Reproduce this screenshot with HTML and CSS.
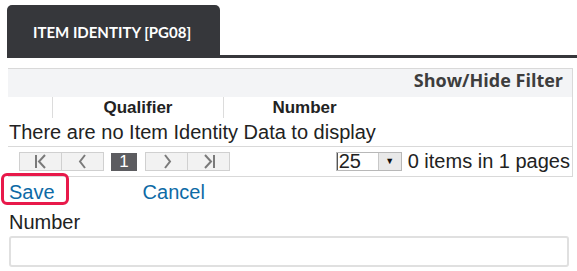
FILE: index.html
```html
<!DOCTYPE html>
<html lang="en">
<head>
    <meta charset="UTF-8">
    <meta name="viewport" content="width=device-width, initial-scale=1.0">
    <title>Item Identity</title>
    <link rel="stylesheet" href="styles.css">
</head>
<body>
    <div class="tabs">
        <div class="tab">ITEM IDENTITY [PG08]</div>
    </div>
    <div class="grid">
        <div class="toolbar">Show/Hide Filter</div>
        <div class="grid-head">
            <div class="col col-first"></div>
            <div class="col col-qual">Qualifier</div>
            <div class="col col-num">Number</div>
        </div>
        <div class="empty">There are no Item Identity Data to display</div>
        <div class="pager">
            <div class="pager-nav">
                <span class="pbtn"><svg width="16" height="15" viewBox="0 0 16 15"><path d="M3 1v13M12 1L6 7.5l6 6.5" fill="none" stroke="#7a7a7a" stroke-width="2"/></svg></span>
                <span class="pbtn"><svg width="10" height="15" viewBox="0 0 10 15"><path d="M7 1L2 7.5l5 6.5" fill="none" stroke="#7a7a7a" stroke-width="2"/></svg></span>
                <span class="pcur">1</span>
                <span class="pbtn"><svg width="10" height="15" viewBox="0 0 10 15"><path d="M3 1l5 6.5-5 6.5" fill="none" stroke="#7a7a7a" stroke-width="2"/></svg></span>
                <span class="pbtn"><svg width="16" height="15" viewBox="0 0 16 15"><path d="M4 1l6 6.5-6 6.5M13 1v13" fill="none" stroke="#7a7a7a" stroke-width="2"/></svg></span>
            </div>
            <div class="pager-info">
                <span class="psize"><span class="psize-val">25</span><span class="psize-arrow">&#9660;</span></span>
                <span>0 items in 1 pages</span>
            </div>
        </div>
    </div>
    <div class="actions">
        <a href="#" class="link save">Save</a>
        <a href="#" class="link">Cancel</a>
    </div>
    <div class="field">
        <label for="number">Number</label>
        <input type="text" id="number">
    </div>
</body>
</html>
```

FILE: styles.css
```css
body { margin: 0; font-family: "Liberation Sans", Arial, sans-serif; color: #222; background: #fff; }
.tabs { margin: 5px 0 0 7px; border-bottom: 3px solid #36373b; display: flex; }
.tab { width: 213px; height: 50px; background: #36373b; color: #fff; border-radius: 5px 5px 0 0; font-family: Lato, sans-serif; font-weight: bold; font-size: 15px; display: flex; align-items: center; padding-left: 26px; box-sizing: border-box; padding-top: 3px; }
.grid { margin: 10px 4px 0 8px; border-top: 1px solid #d9d9d9; border-right: 1px solid #d9d9d9; border-bottom: 1px solid #d9d9d9; }
.toolbar { background: #f3f4f6; height: 28px; line-height: 22px; text-align: right; padding-right: 9px; font-family: "Open Sans", sans-serif; font-weight: bold; font-size: 18px; color: #3d3d3d; }
.grid-head { display: flex; height: 21px; }
.col { font-weight: bold; font-size: 17px; text-align: center; line-height: 22px; }
.col-first { width: 44px; border-right: 1px solid #dcdcdc; }
.col-qual { width: 170px; border-right: 1px solid #dcdcdc; }
.col-num { width: 161px; }
.empty { height: 28px; font-size: 20px; line-height: 28px; padding-left: 1px; border-bottom: 1px solid #d9d9d9; }
.pager { height: 29px; display: flex; align-items: center; justify-content: space-between; }
.pager-nav { display: flex; align-items: center; margin-left: 11px; }
.pbtn { width: 41px; height: 17px; background: #f2f2f2; border: 1px solid #d0d0d0; display: flex; align-items: center; justify-content: center; }
.pbtn + .pbtn { border-left: none; }
.pcur { width: 26px; height: 18px; background: #5c5c60; color: #fff; font-size: 17px; line-height: 18px; text-align: center; margin: 0 8px 0 7px; }
.pager-info { display: flex; align-items: center; gap: 6px; font-size: 20px; padding-right: 2px; }
.psize { display: flex; width: 64px; height: 17px; border: 1px solid #b8b8b8; }
.psize-val { width: 39px; background: #fff; font-size: 20px; line-height: 17px; padding-left: 1px; border-left: 1px solid #555; }
.psize-arrow { flex: 1; background: #e9e9e9; border-left: 1px solid #c8c8c8; font-size: 9px; line-height: 17px; text-align: center; color: #111; }
.actions { display: flex; gap: 88px; padding: 3px 0 0 9px; height: 24px; line-height: 24px; }
.link { color: #0d6aa6; text-decoration: none; font-size: 20px; }
.save { position: relative; }
.save::after { content: ""; position: absolute; left: -8px; top: -7px; width: 68px; height: 32px; box-sizing: border-box; border: 3px solid #e8194a; border-radius: 6px; }
.field { padding: 6px 8px 0 9px; }
.field label { display: block; font-size: 20px; line-height: 24px; }
.field input { display: block; width: 100%; box-sizing: border-box; height: 31px; margin-top: 2px; border: 2px solid #e0e0e0; border-radius: 3px; }
```
